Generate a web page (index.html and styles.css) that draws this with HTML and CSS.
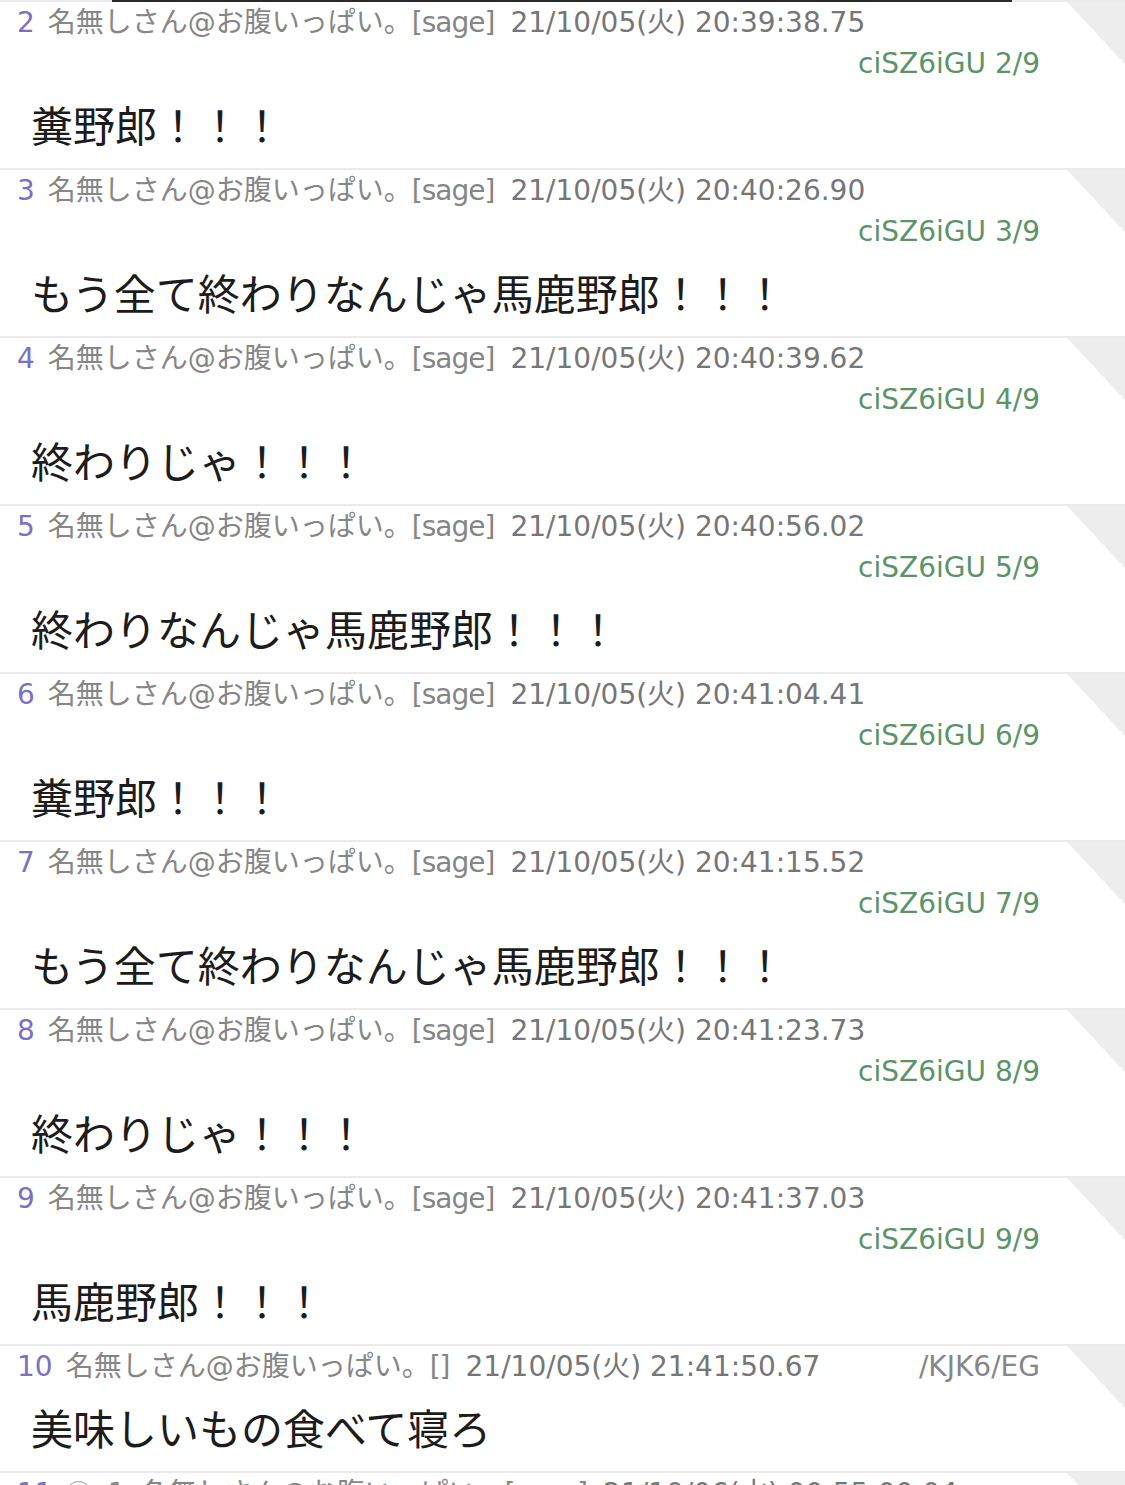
FILE: index.html
```html
<!DOCTYPE html>
<html lang="ja">
<head>
    <meta charset="UTF-8">
    <meta name="viewport" content="width=device-width, initial-scale=1.0">
    <title>スレッド</title>
    <link rel="stylesheet" href="styles.css">
</head>
<body>
    <div class="popup-edge"></div>

    <div class="thread">
        <div class="res">
            <div class="res-head">
                <span class="res-num">2</span>
                <span class="res-name">名無しさん@お腹いっぱい。</span>
                <span class="res-mail">[sage]</span>
                <span class="res-date">21/10/05(火) 20:39:38.75</span>
                <span class="res-id">ciSZ6iGU 2/9</span>
            </div>
            <div class="res-body">糞野郎！！！</div>
        </div>

        <div class="res">
            <div class="res-head">
                <span class="res-num">3</span>
                <span class="res-name">名無しさん@お腹いっぱい。</span>
                <span class="res-mail">[sage]</span>
                <span class="res-date">21/10/05(火) 20:40:26.90</span>
                <span class="res-id">ciSZ6iGU 3/9</span>
            </div>
            <div class="res-body">もう全て終わりなんじゃ馬鹿野郎！！！</div>
        </div>

        <div class="res">
            <div class="res-head">
                <span class="res-num">4</span>
                <span class="res-name">名無しさん@お腹いっぱい。</span>
                <span class="res-mail">[sage]</span>
                <span class="res-date">21/10/05(火) 20:40:39.62</span>
                <span class="res-id">ciSZ6iGU 4/9</span>
            </div>
            <div class="res-body">終わりじゃ！！！</div>
        </div>

        <div class="res">
            <div class="res-head">
                <span class="res-num">5</span>
                <span class="res-name">名無しさん@お腹いっぱい。</span>
                <span class="res-mail">[sage]</span>
                <span class="res-date">21/10/05(火) 20:40:56.02</span>
                <span class="res-id">ciSZ6iGU 5/9</span>
            </div>
            <div class="res-body">終わりなんじゃ馬鹿野郎！！！</div>
        </div>

        <div class="res">
            <div class="res-head">
                <span class="res-num">6</span>
                <span class="res-name">名無しさん@お腹いっぱい。</span>
                <span class="res-mail">[sage]</span>
                <span class="res-date">21/10/05(火) 20:41:04.41</span>
                <span class="res-id">ciSZ6iGU 6/9</span>
            </div>
            <div class="res-body">糞野郎！！！</div>
        </div>

        <div class="res">
            <div class="res-head">
                <span class="res-num">7</span>
                <span class="res-name">名無しさん@お腹いっぱい。</span>
                <span class="res-mail">[sage]</span>
                <span class="res-date">21/10/05(火) 20:41:15.52</span>
                <span class="res-id">ciSZ6iGU 7/9</span>
            </div>
            <div class="res-body">もう全て終わりなんじゃ馬鹿野郎！！！</div>
        </div>

        <div class="res">
            <div class="res-head">
                <span class="res-num">8</span>
                <span class="res-name">名無しさん@お腹いっぱい。</span>
                <span class="res-mail">[sage]</span>
                <span class="res-date">21/10/05(火) 20:41:23.73</span>
                <span class="res-id">ciSZ6iGU 8/9</span>
            </div>
            <div class="res-body">終わりじゃ！！！</div>
        </div>

        <div class="res">
            <div class="res-head">
                <span class="res-num">9</span>
                <span class="res-name">名無しさん@お腹いっぱい。</span>
                <span class="res-mail">[sage]</span>
                <span class="res-date">21/10/05(火) 20:41:37.03</span>
                <span class="res-id">ciSZ6iGU 9/9</span>
            </div>
            <div class="res-body">馬鹿野郎！！！</div>
        </div>

        <div class="res">
            <div class="res-head">
                <span class="res-num">10</span>
                <span class="res-name">名無しさん@お腹いっぱい。</span>
                <span class="res-mail">[]</span>
                <span class="res-date">21/10/05(火) 21:41:50.67</span>
                <span class="res-id plain">/KJK6/EG</span>
            </div>
            <div class="res-body">美味しいもの食べて寝ろ</div>
        </div>

        <div class="res">
            <div class="res-head">
                <span class="res-num">11</span>
                <span class="res-reply"></span>
                <span class="res-count">1</span>
                <span class="res-name">名無しさん@お腹いっぱい。</span>
                <span class="res-mail">[sage]</span>
                <span class="res-date">21/10/06(水) 00:55:00.04</span>
            </div>
            <div class="res-body">おやすみ</div>
        </div>
    </div>
</body>
</html>
```

FILE: styles.css
```css
body {
    margin: 0;
    padding: 0;
    background: #fff;
    font-family: "DejaVu Sans", "Noto Sans CJK JP", sans-serif;
    overflow: hidden;
}

/* dark edge of the popup above the list */
.popup-edge {
    position: absolute;
    top: 0;
    left: 112px;
    width: 900px;
    height: 2px;
    background: #2b2b2b;
    z-index: 2;
}

.res {
    position: relative;
    border-top: 2px solid #ebebeb;
    padding-bottom: 16px;
}

/* folded corner in the top right */
.res::after {
    content: "";
    position: absolute;
    top: 0;
    right: 0;
    width: 58px;
    height: 62px;
    background: #ededed;
    clip-path: polygon(0 0, 100% 0, 100% 100%);
}

.res-head {
    display: flex;
    flex-wrap: wrap;
    align-items: baseline;
    padding: 0 85px 0 17px;
    font-size: 28px;
    line-height: 41px;
    color: #868686;
}

.res-num {
    color: #7a70c6;
    margin-right: 13px;
}

.res-reply {
    align-self: center;
    width: 23px;
    height: 23px;
    border: 1.5px solid #9a9a9a;
    border-radius: 50%;
    margin-right: 17px;
}

.res-count {
    margin-right: 15px;
}

.res-mail {
    letter-spacing: -1px;
}

.res-date {
    margin-left: 16px;
    color: #767676;
}

.res-id {
    margin-left: auto;
    color: #5c9468;
}

.res-id.plain {
    color: #868686;
}

.res-body {
    margin-top: 12px;
    padding-left: 31px;
    font-family: "Noto Sans CJK JP", sans-serif;
    font-size: 42px;
    line-height: 56px;
    color: #1c1c1c;
}
```
